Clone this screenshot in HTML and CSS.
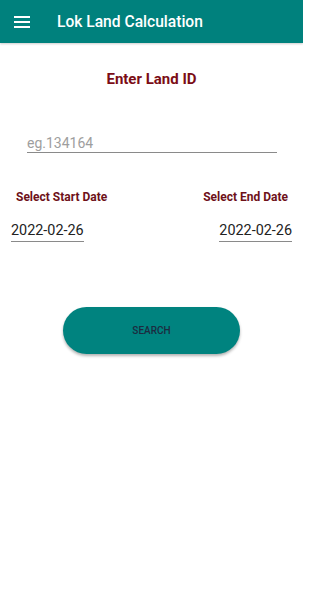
FILE: index.html
```html
<!DOCTYPE html>
<html>
<head>
<meta charset="utf-8">
<link rel="stylesheet" href="styles.css">
</head>
<body>
<header class="appbar">
  <svg class="menu" width="16" height="12" viewBox="0 0 16 12"><rect x="0" y="0" width="16" height="2" fill="#fff"/><rect x="0" y="5" width="16" height="2" fill="#fff"/><rect x="0" y="10" width="16" height="2" fill="#fff"/></svg>
  <div class="title">Lok Land Calculation</div>
</header>
<main class="content">
  <h1 class="heading">Enter Land ID</h1>
  <div class="field"><span class="placeholder">eg.134164</span></div>
  <div class="labels">
    <span class="label">Select Start Date</span>
    <span class="label">Select End Date</span>
  </div>
  <div class="dates">
    <span class="date">2022-02-26</span>
    <span class="date">2022-02-26</span>
  </div>
  <div class="btnrow"><button class="search">SEARCH</button></div>
</main>
</body>
</html>
```
FILE: styles.css
```css
html, body { margin: 0; padding: 0; background: #fff; }
body { width: 303px; height: 592px; font-family: Roboto, "Liberation Sans", sans-serif; overflow: hidden; }
.appbar { height: 43px; background: #00817d; display: flex; align-items: center; padding-left: 14px; box-sizing: border-box; box-shadow: 0 1px 2px rgba(0,0,0,0.2); }
.menu { display: block; }
.title { color: #fff; font-size: 15.6px; font-weight: 500; margin-left: 27px; }
.content { display: flex; flex-direction: column; }
.heading { margin: 27px 0 0; text-align: center; font-size: 15px; font-weight: 700; color: #7b0d16; line-height: 18px; }
.field { margin: 44px 26px 0 27px; border-bottom: 1px solid #8a8a8a; height: 17px; padding-top: 3px; line-height: 16px; }
.placeholder { font-size: 14px; color: #9e9e9e; }
.labels { display: flex; justify-content: space-between; padding: 0 15px 0 16px; margin-top: 37px; }
.label { font-size: 12px; font-weight: 700; color: #6e1119; line-height: 14px; }
.dates { display: flex; justify-content: space-between; padding: 0 11px; margin-top: 18px; }
.date { font-size: 14.4px; color: #222; line-height: 17px; padding-bottom: 2px; border-bottom: 1px solid #8a8a8a; }
.btnrow { display: flex; justify-content: center; margin-top: 65px; }
.search { width: 177px; height: 47px; border: none; border-radius: 24px; background: #00837f; color: #1c2b40; font-family: Roboto, "Liberation Sans", sans-serif; font-size: 10px; font-weight: 500; box-shadow: 0 2px 3px rgba(0,0,0,0.3); }
```
